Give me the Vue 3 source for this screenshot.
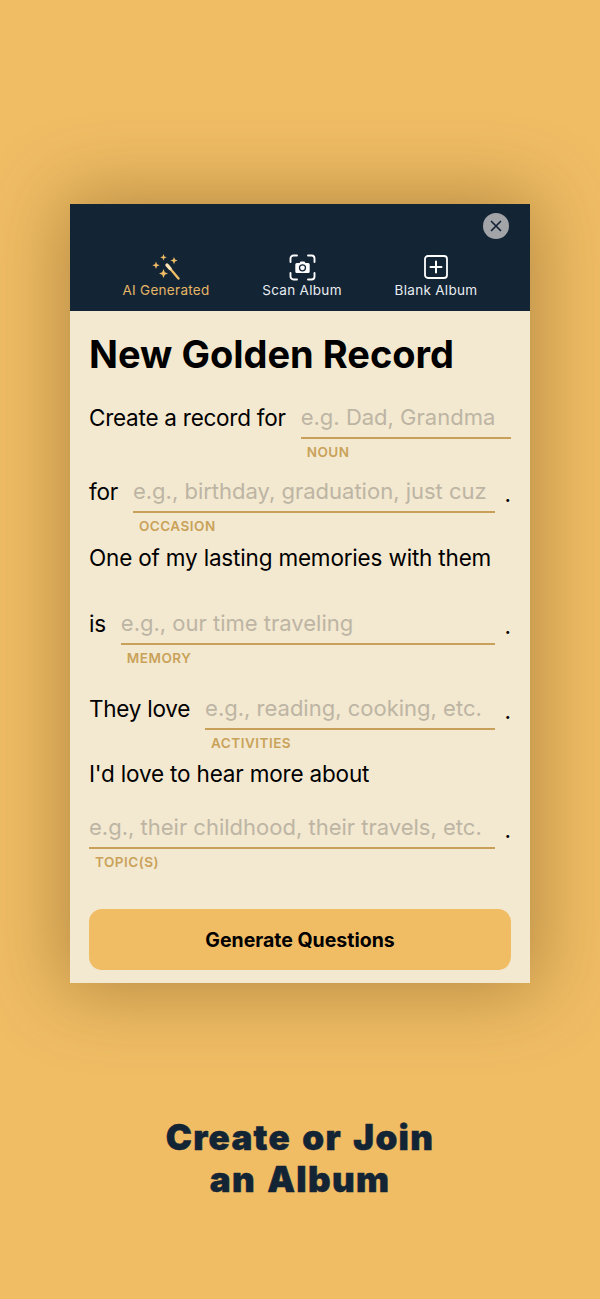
<script setup>
const tabs = [
  { label: 'AI Generated', icon: 'wand', active: true },
  { label: 'Scan Album', icon: 'scan' },
  { label: 'Blank Album', icon: 'plus' }
]

const rows = [
  { lead: 'Create a record for', hint: 'e.g. Dad, Grandma', tag: 'NOUN', cls: 'row-noun' },
  { lead: 'for', hint: 'e.g., birthday, graduation, just cuz', tag: 'OCCASION', dot: true, cls: 'row-occasion' },
  { above: 'One of my lasting memories with them', lead: 'is', hint: 'e.g., our time traveling', tag: 'MEMORY', dot: true, cls: 'row-memory' },
  { lead: 'They love', hint: 'e.g., reading, cooking, etc.', tag: 'ACTIVITIES', dot: true, cls: 'row-activities' },
  { above: "I'd love to hear more about", hint: 'e.g., their childhood, their travels, etc.', tag: 'TOPIC(S)', dot: true, cls: 'row-topic' }
]
</script>

<template>
  <div class="screen">
    <div class="card">
      <div class="card-head">
        <button class="close" aria-label="Close">
          <svg width="12" height="12" viewBox="0 0 12 12">
            <path d="M1.5 1.5l9 9M10.5 1.5l-9 9" stroke="#132435" stroke-width="1.7" stroke-linecap="round" />
          </svg>
        </button>
        <div class="tabs">
          <div v-for="tab in tabs" :key="tab.label" class="tab" :class="[`tab-${tab.icon}`, { active: tab.active }]">
            <svg v-if="tab.icon === 'wand'" class="tab-icon" width="30" height="28" viewBox="0 0 30 28">
              <g fill="#f0bd65">
                <path d="M12.5 1l.9 2.4 2.4.9-2.4.9-.9 2.4-.9-2.4-2.4-.9 2.4-.9z" />
                <path d="M23 4l1 2.6 2.6 1-2.6 1-1 2.6-1-2.600-2.600-1 2.600-1z" />
                <path d="M5 8.500l1 2.700 2.700 1-2.700 1-1 2.700-1-2.700-2.700-1 2.700-1z" />
                <path d="M12.500 16l1.300 3.200 3.200 1.300-3.200 1.300-1.300 3.200-1.300-3.200-3.200-1.300 3.200-1.300z" />
              </g>
              <path d="M16.500 12.500l11 13" stroke="#f0bd65" stroke-width="2.400" stroke-linecap="round" />
              <path d="M16 12l3 3.500" stroke="#fbe3b4" stroke-width="3.400" stroke-linecap="round" />
            </svg>
            <svg v-else-if="tab.icon === 'scan'" class="tab-icon" width="27" height="27" viewBox="0 0 27 27">
              <path d="M1.500 8V4.500a3 3 0 0 1 3-3H8M19 1.500h3.500a3 3 0 0 1 3 3V8M25.500 19v3.500a3 3 0 0 1-3 3H19M8 25.500H4.500a3 3 0 0 1-3-3V19" fill="none" stroke="#fff" stroke-width="1.900" stroke-linecap="round" />
              <path d="M7.800 9h2.700l1.100-1.600h3.800L16.500 9h2.700a1.500 1.500 0 0 1 1.500 1.500v7a1.500 1.500 0 0 1-1.500 1.500H7.800a1.500 1.500 0 0 1-1.500-1.500v-7A1.500 1.500 0 0 1 7.800 9z" fill="#fff" />
              <circle cx="13.500" cy="13.800" r="3" fill="none" stroke="#132435" stroke-width="1.300" />
            </svg>
            <svg v-else class="tab-icon" width="24" height="24" viewBox="0 0 24 24">
              <rect x="1" y="1" width="22" height="22" rx="3" fill="none" stroke="#fff" stroke-width="1.800" />
              <path d="M12 6.500v11M6.500 12h11" stroke="#fff" stroke-width="2" stroke-linecap="round" />
            </svg>
            <span class="tab-label">{{ tab.label }}</span>
          </div>
        </div>
      </div>

      <div class="card-body">
        <h1 class="title">New Golden Record</h1>
        <div v-for="row in rows" :key="row.tag" class="row" :class="row.cls">
          <p v-if="row.above" class="above">{{ row.above }}</p>
          <div class="line">
            <span v-if="row.lead" class="lead">{{ row.lead }}</span>
            <div class="field">
              <div class="hint">{{ row.hint }}</div>
              <div class="tag">{{ row.tag }}</div>
            </div>
            <span v-if="row.dot" class="dot">.</span>
          </div>
        </div>
        <button class="generate">Generate Questions</button>
      </div>
    </div>
    <h2 class="caption">Create or Join<br>an Album</h2>
  </div>
</template>

<style>
html, body {
  margin: 0;
  background: #f0bd65;
}
</style>

<style scoped>
.screen {
  height: 1299px;
  box-sizing: border-box;
  padding-top: 204px;
  background: #f0bd65;
  font-family: Inter, "Liberation Sans", sans-serif;
  overflow: hidden;
}

.card {
  width: 460px;
  height: 779px;
  margin: 0 auto;
  display: flex;
  flex-direction: column;
  box-shadow: 0 0 70px 8px rgba(100, 70, 20, 0.42);
}

.card-head {
  position: relative;
  height: 107px;
  flex-shrink: 0;
  background: #132435;
}

.close {
  position: absolute;
  top: 9px;
  right: 21px;
  width: 26px;
  height: 26px;
  padding: 0;
  border: 0;
  border-radius: 50%;
  background: #a3a4a8;
  display: flex;
  align-items: center;
  justify-content: center;
}

.tabs {
  height: 100%;
  box-sizing: border-box;
  position: relative;
}

.tab {
  position: absolute;
  bottom: 13px;
  width: 130px;
  display: flex;
  flex-direction: column;
  align-items: center;
  color: #e9edf0;
}

.tab-wand { left: 31px; }
.tab-scan { left: 167px; }
.tab-plus { left: 301px; }

.tab.active {
  color: #e5b665;
}

.tab-label {
  margin-top: 3px;
  font-size: 13.5px;
  line-height: 16px;
  letter-spacing: 0.3px;
}

.tab-wand .tab-label,
.tab-scan .tab-label {
  margin-top: 1px;
}

.card-body {
  flex: 1;
  background: #f3e8d0;
  padding: 21px 19px 13px;
  display: flex;
  flex-direction: column;
}

.title {
  margin: 0;
  font-size: 38px;
  line-height: 44px;
  font-weight: 700;
  letter-spacing: 0;
  color: #000;
}

.row {
  font-size: 22.5px;
  color: #000;
}

.row-noun { margin-top: 25px; }
.row-occasion { margin-top: 15px; }
.row-memory { margin-top: 9px; }
.row-activities { margin-top: 26px; }
.row-topic { margin-top: 8px; }

.above {
  margin: 0;
  line-height: 30px;
  letter-spacing: -0.18px;
}

.row-memory .above { margin-bottom: 34px; }
.row-topic .above { margin-bottom: 22px; }

.line {
  display: flex;
  align-items: flex-start;
}

.lead {
  line-height: 33px;
  letter-spacing: -0.25px;
  margin-right: 15px;
}

.field {
  flex: 1;
  min-width: 0;
}

.hint {
  height: 36px;
  line-height: 33px;
  border-bottom: 2.5px solid #c9a059;
  font-size: 22px;
  color: #bdb5a4;
  white-space: nowrap;
}

.tag {
  margin-top: 5px;
  padding-left: 6px;
  font-size: 13.5px;
  line-height: 16px;
  font-weight: 600;
  letter-spacing: 0.5px;
  color: #c9a25a;
}

.dot {
  width: 16px;
  line-height: 38px;
  text-align: right;
  flex-shrink: 0;
}

.generate {
  margin-top: auto;
  height: 61px;
  border: 0;
  border-radius: 13px;
  background: #f0bd65;
  font-family: inherit;
  font-size: 19.5px;
  font-weight: 700;
  color: #000;
  flex-shrink: 0;
}

.caption {
  margin: 134px 0 0;
  text-align: center;
  font-size: 35px;
  line-height: 41.5px;
  font-weight: 900;
  letter-spacing: 1.3px;
  word-spacing: 3px;
  -webkit-text-stroke: 0.5px #132435;
  color: #132435;
}
</style>
